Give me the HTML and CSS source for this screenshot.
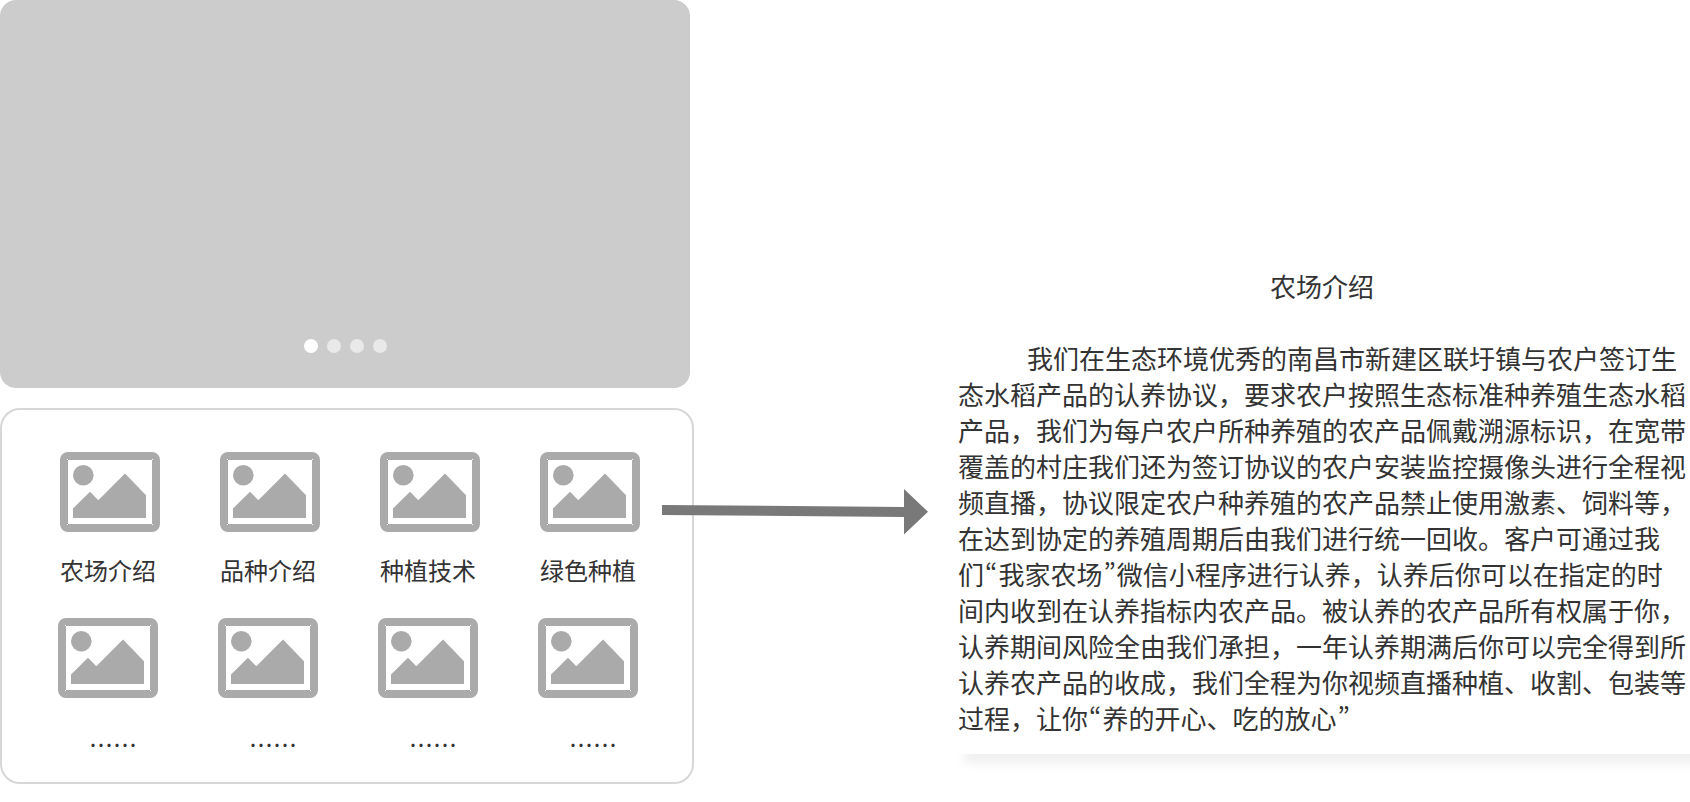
FILE: index.html
```html
<!DOCTYPE html>
<html lang="zh-CN">
<head>
<meta charset="utf-8">
<title>农场介绍</title>
<link rel="stylesheet" href="styles.css">
</head>
<body>
<svg class="defs" width="0" height="0" aria-hidden="true">
  <symbol id="picture" viewBox="0 0 100 80">
    <rect x="4" y="4" width="92" height="72" rx="4" fill="#fff" stroke="#aaa" stroke-width="8"/>
    <path d="M7 7h1v1h-1zM92 7h1v1h-1zM7 72h1v1h-1zM92 72h1v1h-1z" fill="#fff"/>
    <circle cx="23.3" cy="23.2" r="10.3" fill="#aaa"/>
    <path d="M13 56.6 30 39.8l8.3 8.4L65 21.6l21 21.6V66H13z" fill="#aaa"/>
  </symbol>
</svg>
<main class="board">
  <div class="home">
    <section class="carousel" aria-label="轮播图">
      <button class="dot dot-active" type="button" aria-label="第1张"></button>
      <button class="dot" type="button" aria-label="第2张"></button>
      <button class="dot" type="button" aria-label="第3张"></button>
      <button class="dot" type="button" aria-label="第4张"></button>
    </section>
    <nav class="menu">
      <div class="row">
        <a class="tile" href="#intro"><svg class="picture"><use href="#picture"/></svg><span>农场介绍</span></a>
        <a class="tile" href="#"><svg class="picture"><use href="#picture"/></svg><span>品种介绍</span></a>
        <a class="tile" href="#"><svg class="picture"><use href="#picture"/></svg><span>种植技术</span></a>
        <a class="tile" href="#"><svg class="picture"><use href="#picture"/></svg><span>绿色种植</span></a>
      </div>
      <div class="row row-more">
        <a class="tile" href="#"><svg class="picture"><use href="#picture"/></svg><span>……</span></a>
        <a class="tile" href="#"><svg class="picture"><use href="#picture"/></svg><span>……</span></a>
        <a class="tile" href="#"><svg class="picture"><use href="#picture"/></svg><span>……</span></a>
        <a class="tile" href="#"><svg class="picture"><use href="#picture"/></svg><span>……</span></a>
      </div>
    </nav>
  </div>
  <div class="link">
    <svg class="arrow" viewBox="0 0 266 46" aria-hidden="true">
      <path d="M0 16 242 18V0l24 22.8L242 45.500V28L0 26z" fill="#797979"/>
    </svg>
  </div>
  <article class="intro" id="intro">
    <h1 class="title">农场介绍</h1>
    <p class="text">我们在生态环境优秀的南昌市新建区联圩镇与农户签订生态水稻产品的认养协议，要求农户按照生态标准种养殖生态水稻产品，我们为每户农户所种养殖的农产品佩戴溯源标识，在宽带覆盖的村庄我们还为签订协议的农户安装监控摄像头进行全程视频直播，协议限定农户种养殖的农产品禁止使用激素、饲料等，在达到协定的养殖周期后由我们进行统一回收。客户可通过我<span class="phrase">们<span class="quote">“</span>我家农场<span class="quote">”</span></span>微信小程序进行认养，认养后你可以在指定的时间内收到在认养指标内农产品。被认养的农产品所有权属于你，认养期间风险全由我们承担，一年认养期满后你可以完全得到所认养农产品的收成，我们全程为你视频直播种植、收割、包装等过程，让你<span class="quote">“</span>养的开心、吃的放心<span class="quote">”</span></p>
  </article>
</main>
</body>
</html>
```
FILE: styles.css
```css
* {
  box-sizing: border-box;
}

body {
  margin: 0;
  background: #fff;
  color: #333;
  font-family: "Noto Sans CJK SC", sans-serif;
  overflow-x: hidden;
}

.defs {
  position: absolute;
}

.board {
  display: grid;
  grid-template-columns: 694fr 260fr 736fr;
  align-items: start;
}

.home {
  display: flex;
  flex-direction: column;
  gap: 20px;
}

.carousel {
  display: flex;
  justify-content: center;
  align-items: flex-end;
  gap: 9px;
  min-height: 388px;
  margin-right: 4px;
  padding-bottom: 35px;
  border-radius: 16px;
  background: #ccc;
}

.dot {
  width: 14px;
  height: 14px;
  padding: 0;
  border: 0;
  border-radius: 50%;
  background: #e9e9e9;
}

.dot-active {
  background: #fff;
}

.menu {
  display: flex;
  flex-direction: column;
  gap: 30px;
  padding: 42px 52px 20px 58px;
  border: 2px solid #d7d7d7;
  border-radius: 20px;
}

.row {
  display: flex;
  justify-content: space-between;
}

.row-more {
  margin: 0 2px 0 -2px;
}

.tile {
  display: flex;
  flex-direction: column;
  gap: 20px;
  width: 100px;
  color: inherit;
  font-size: 24px;
  line-height: 36px;
  text-decoration: none;
}

.row-more .tile {
  gap: 28px;
}

.row-more span {
  padding-left: 31px;
}

.picture {
  width: 100px;
  height: 80px;
}

.link {
  position: relative;
  align-self: stretch;
}

.arrow {
  position: absolute;
  top: 489px;
  left: -32px;
  width: calc(100% + 6px);
}

.intro {
  padding: 268px 4px 18px;
  box-shadow: 10px 10px 10px rgba(0, 0, 0, 0.06);
}

.title {
  margin: 0 0 36px;
  font-size: 26px;
  font-weight: 400;
  line-height: 36px;
  text-align: center;
}

.text {
  margin: 0;
  font-size: 26px;
  line-height: 36px;
  text-indent: 69px;
}

.phrase {
  white-space: nowrap;
}

.quote {
  padding: 0 1px;
  font-feature-settings: "palt", "pwid";
}
```
